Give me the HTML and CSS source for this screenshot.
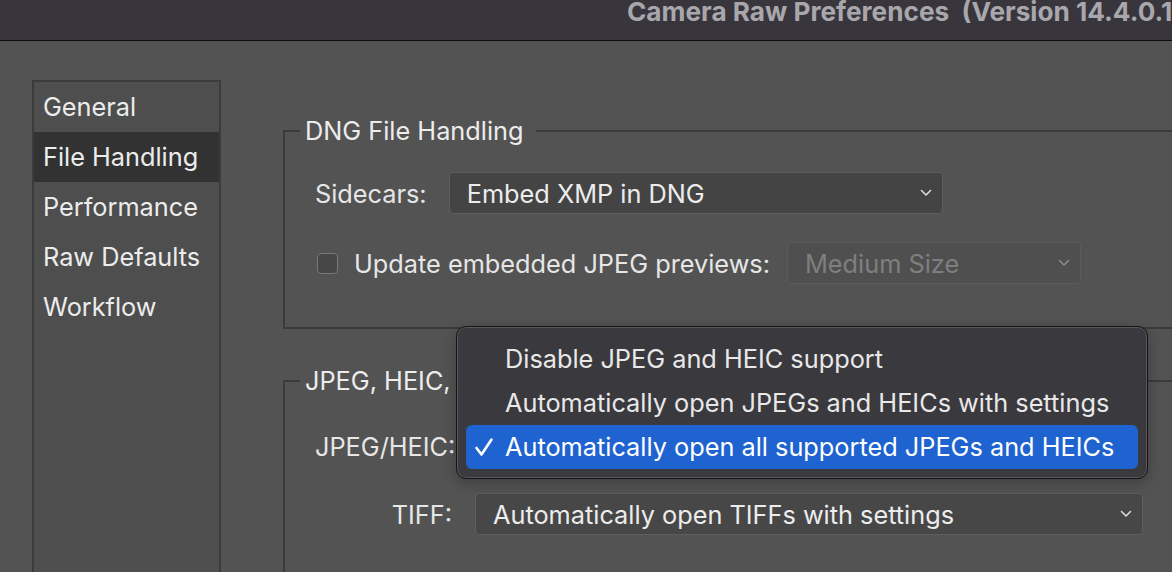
FILE: index.html
```html
<!DOCTYPE html>
<html>
<head>
<meta charset="utf-8">
<link rel="stylesheet" href="styles.css">
</head>
<body>
<div class="window">
  <header class="titlebar"><span class="title">Camera Raw Preferences&nbsp;&nbsp;(Version 14.4.0.1)</span></header>
  <div class="main">
    <nav class="sidebar">
      <div class="nav-item">General</div>
      <div class="nav-item selected">File Handling</div>
      <div class="nav-item">Performance</div>
      <div class="nav-item">Raw Defaults</div>
      <div class="nav-item">Workflow</div>
    </nav>
    <div class="content">
      <fieldset class="group group-dng">
        <legend>DNG File Handling</legend>
        <div class="group-body">
          <div class="row row-sidecars">
            <span class="label">Sidecars:</span>
            <div class="select select-sidecars"><span>Embed XMP in DNG</span><svg class="chev" width="12" height="8" viewBox="0 0 12 8"><polyline points="1.5,1.5 6,6 10.5,1.5" fill="none" stroke="currentColor" stroke-width="1.6" stroke-linecap="round" stroke-linejoin="round"/></svg></div>
          </div>
          <div class="row row-check">
            <span class="checkbox"></span>
            <span class="label check-label">Update embedded JPEG previews:</span>
            <div class="select select-disabled"><span>Medium Size</span><svg class="chev" width="12" height="8" viewBox="0 0 12 8"><polyline points="1.5,1.5 6,6 10.5,1.5" fill="none" stroke="currentColor" stroke-width="1.6" stroke-linecap="round" stroke-linejoin="round"/></svg></div>
          </div>
        </div>
      </fieldset>
      <fieldset class="group group-jpeg">
        <legend>JPEG, HEIC, and TIFF Handling</legend>
        <div class="group-body form-grid">
          <span class="label right">JPEG/HEIC:</span>
          <div class="select select-wide"><span></span><svg class="chev" width="12" height="8" viewBox="0 0 12 8"><polyline points="1.5,1.5 6,6 10.5,1.5" fill="none" stroke="currentColor" stroke-width="1.6" stroke-linecap="round" stroke-linejoin="round"/></svg></div>
          <span class="label right">TIFF:</span>
          <div class="select select-wide"><span>Automatically open TIFFs with settings</span><svg class="chev" width="12" height="8" viewBox="0 0 12 8"><polyline points="1.5,1.5 6,6 10.5,1.5" fill="none" stroke="currentColor" stroke-width="1.6" stroke-linecap="round" stroke-linejoin="round"/></svg></div>
        </div>
      </fieldset>
    </div>
  </div>
  <div class="menu">
    <div class="menu-item"><span class="check"></span>Disable JPEG and HEIC support</div>
    <div class="menu-item"><span class="check"></span>Automatically open JPEGs and HEICs with settings</div>
    <div class="menu-item active"><span class="check"><svg width="20" height="20" viewBox="0 0 20 20"><polyline points="2.5,11 7.5,17.5 17.5,2.5" fill="none" stroke="currentColor" stroke-width="2.6" stroke-linecap="round" stroke-linejoin="round"/></svg></span>Automatically open all supported JPEGs and HEICs</div>
  </div>
</div>
</body>
</html>
```
FILE: styles.css
```css
html, body {
  margin: 0;
  padding: 0;
}
body {
  width: 1172px;
  height: 572px;
  overflow: hidden;
  background: #535353;
  font-family: Inter, "Noto Sans", sans-serif;
  color: #e6e6e6;
  font-size: 25.3px;
}
.window {
  position: relative;
  width: 1172px;
  height: 572px;
  overflow: hidden;
}
.titlebar {
  height: 40px;
  background: #38363c;
  border-bottom: 1px solid #0e0e0e;
  box-sizing: content-box;
  padding-left: 627px;
  white-space: nowrap;
  overflow: hidden;
}
.title {
  display: block;
  font-weight: 700;
  font-size: 26.2px;
  line-height: 24px;
  color: #a8a7ac;
}
.main {
  display: flex;
  padding-top: 39px;
  padding-left: 32px;
}
.sidebar {
  width: 185px;
  height: 520px;
  border: 2px solid #3b3b3b;
  background: #4e4e4e;
  flex: none;
  display: flex;
  flex-direction: column;
}
.nav-item {
  height: 50px;
  line-height: 50px;
  padding-left: 9px;
  white-space: nowrap;
  color: #ececec;
}
.nav-item.selected {
  background: #323232;
}
.content {
  margin-left: 62px;
  margin-top: 37px;
  display: flex;
  flex-direction: column;
  gap: 38px;
  flex: none;
}
.group {
  margin: 0;
  border: 2px solid #3b3b3b;
  padding: 0;
  width: 930px;
  min-width: 0;
  box-sizing: border-box;
}
.group legend {
  margin-left: 15px;
  padding: 0 12px 0 5px;
  line-height: 28px;
  color: #ececec;
  white-space: nowrap;
}
.group-body {
  padding-left: 30px;
}
.group-dng {
  height: 212px;
}
.group-dng .group-body {
  padding-top: 27px;
}
.row {
  display: flex;
  align-items: center;
}
.row-sidecars {
  gap: 22px;
}
.row-check {
  margin-top: 28px;
}
.label {
  white-space: nowrap;
}
.check-label {
  margin-left: 16px;
  margin-right: 17px;
}
.checkbox {
  width: 19px;
  height: 19px;
  border: 1.5px solid #7a7a7a;
  border-radius: 4px;
  background: #474747;
  margin-left: 2px;
  flex: none;
}
.select {
  box-sizing: border-box;
  height: 42px;
  border: 1.5px solid #5e5e5e;
  border-radius: 4px;
  background: #444444;
  display: flex;
  align-items: center;
  justify-content: space-between;
  padding: 0 10px 0 17px;
  white-space: nowrap;
  color: #ececec;
  flex: none;
}
.select .chev {
  color: #dcdcdc;
  flex: none;
}
.select-sidecars {
  width: 494px;
}
.select-disabled {
  width: 294px;
  background: #4f4f4f;
  border-color: #5b5b5b;
  color: #7f7f7f;
}
.select-disabled .chev {
  color: #8a8a8a;
}
.group-jpeg {
  height: 260px;
}
.form-grid {
  padding-top: 30px;
  display: grid;
  grid-template-columns: 137px 668px;
  column-gap: 23px;
  row-gap: 26px;
  align-items: center;
}
.label.right {
  text-align: right;
}
.select-wide {
  background: #474747;
}
.menu {
  position: absolute;
  left: 456px;
  top: 326px;
  width: 692px;
  box-sizing: border-box;
  padding: 10px 9px 9px;
  background: #3a393e;
  border: 1px solid #151515;
  border-radius: 10px;
  box-shadow: inset 0 0 0 1px #58575c, 0 4px 14px rgba(0, 0, 0, 0.25);
  display: flex;
  flex-direction: column;
}
.menu-item {
  height: 44px;
  line-height: 44px;
  display: flex;
  align-items: center;
  border-radius: 6px;
  white-space: nowrap;
  color: #e8e8e8;
}
.menu-item .check {
  width: 39px;
  padding-left: 8px;
  box-sizing: border-box;
  flex: none;
  display: flex;
  align-items: center;
}
.menu-item.active {
  background: #1e63d0;
  color: #ffffff;
}
```
